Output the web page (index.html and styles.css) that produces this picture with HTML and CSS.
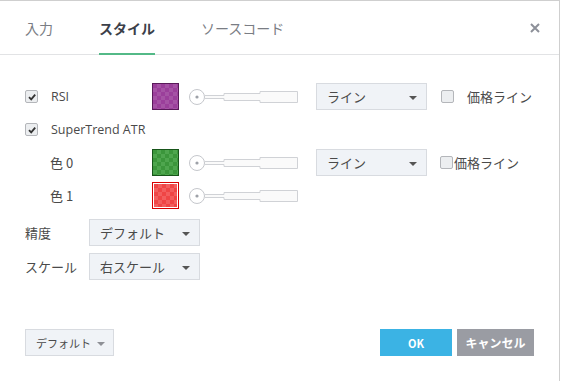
FILE: index.html
```html
<!DOCTYPE html>
<html>
<head>
<link rel="stylesheet" href="styles.css">
</head>
<body>

<div class="dialog">
  <div class="dialog-header">
    <div class="tab">入力</div>
    <div class="tab active">スタイル</div>
    <div class="tab">ソースコード</div>
    <div class="close">
      <svg width="10" height="10" viewBox="0 0 10 10"><path d="M1 1L9 9M9 1L1 9" stroke="#8d9099" stroke-width="2"/></svg>
    </div>
  </div>

  <div class="dialog-body">
    <div class="plot-row">
      <div class="plot-name">
        <span class="check on"><svg width="10" height="10" viewBox="0 0 10 10"><path d="M2 5.2L4.2 7.4L8.2 2.6" stroke="#333" stroke-width="1.8" fill="none"/></svg></span>
        <span class="latin">RSI</span>
      </div>
      <div class="swatch purple"><div class="swatch-fill"></div></div>
      <svg class="slider" width="110" height="20" viewBox="0 0 110 20">
        <path d="M17 8.5H36V6.5H72V4.5H109.5V15.5H72V13.5H36V11.5H17" fill="#fafafa" stroke="#d0d2d6"/>
        <circle cx="9" cy="10" r="7.5" fill="#fff" stroke="#c5c7cc"/>
        <circle cx="9" cy="10" r="1.6" fill="#9ea1a8"/>
      </svg>
      <div class="select wide">ライン<span class="caret"></span></div>
      <div class="price-line">
        <span class="check"></span>
        <span>価格ライン</span>
      </div>
    </div>

    <div class="plot-row">
      <div class="plot-name">
        <span class="check on"><svg width="10" height="10" viewBox="0 0 10 10"><path d="M2 5.2L4.2 7.4L8.2 2.6" stroke="#333" stroke-width="1.8" fill="none"/></svg></span>
        <span class="latin">SuperTrend ATR</span>
      </div>
    </div>

    <div class="plot-row">
      <div class="plot-name sub">色 0</div>
      <div class="swatch green"><div class="swatch-fill"></div></div>
      <svg class="slider" width="110" height="20" viewBox="0 0 110 20">
        <path d="M17 8.5H36V6.5H72V4.5H109.5V15.5H72V13.5H36V11.5H17" fill="#fafafa" stroke="#d0d2d6"/>
        <circle cx="9" cy="10" r="7.5" fill="#fff" stroke="#c5c7cc"/>
        <circle cx="9" cy="10" r="1.6" fill="#9ea1a8"/>
      </svg>
      <div class="select wide">ライン<span class="caret"></span></div>
      <div class="price-line tight">
        <span class="check"></span>
        <span>価格ライン</span>
      </div>
    </div>

    <div class="plot-row">
      <div class="plot-name sub">色 1</div>
      <div class="swatch red"><div class="swatch-fill"></div></div>
      <svg class="slider" width="110" height="20" viewBox="0 0 110 20">
        <path d="M17 8.5H36V6.5H72V4.5H109.5V15.5H72V13.5H36V11.5H17" fill="#fafafa" stroke="#d0d2d6"/>
        <circle cx="9" cy="10" r="7.5" fill="#fff" stroke="#c5c7cc"/>
        <circle cx="9" cy="10" r="1.6" fill="#9ea1a8"/>
      </svg>
    </div>

    <div class="option-rows">
      <div class="option-row">
        <span class="option-label">精度</span>
        <div class="select">デフォルト<span class="caret"></span></div>
      </div>
      <div class="option-row">
        <span class="option-label">スケール</span>
        <div class="select">右スケール<span class="caret"></span></div>
      </div>
    </div>
  </div>

  <div class="dialog-footer">
    <div class="defaults-btn">デフォルト<span class="caret light"></span></div>
    <div class="footer-actions">
      <div class="btn ok">OK</div>
      <div class="btn cancel">キャンセル</div>
    </div>
  </div>
</div>

</body>
</html>
```

FILE: styles.css
```css
body {
  margin: 0;
  background: #fff;
  font-family: "Noto Sans CJK JP", "Noto Sans", sans-serif;
  color: #4a4a4a;
}

.dialog {
  width: 559px;
  height: 380px;
  border-top: 1px solid #cfcfcf;
  border-right: 1px solid #cfcfcf;
  background: #fff;
  position: relative;
}

.dialog-header {
  display: flex;
  align-items: stretch;
  height: 53px;
  padding-left: 25px;
  border-bottom: 1px solid #e2e3e5;
}

.tab {
  font-size: 14px;
  color: #7a7d84;
  margin-right: 46px;
  display: flex;
  align-items: center;
  border-bottom: 2px solid transparent;
  margin-bottom: -1px;
  padding-top: 1px;
}

.tab.active {
  color: #3c4049;
  font-weight: bold;
  border-bottom-color: #53b987;
}

.close {
  margin-left: auto;
  margin-right: 19px;
  display: flex;
  align-items: center;
}

.dialog-body {
  padding: 28px 0 0 25px;
  font-size: 13px;
}

.plot-row {
  display: flex;
  align-items: center;
  height: 27px;
  margin-bottom: 6px;
}

.plot-name {
  width: 127px;
  display: flex;
  align-items: center;
}

.plot-name.sub {
  padding-left: 25px;
  width: 102px;
}

.latin {
  font-family: "Open Sans", sans-serif;
  font-size: 12.5px;
}

.check {
  width: 11px;
  height: 11px;
  border: 1px solid #b4b6ba;
  border-radius: 2px;
  background: #eceef0;
  display: inline-flex;
  align-items: center;
  justify-content: center;
  margin-right: 13px;
  flex: none;
}

.swatch {
  width: 25px;
  height: 25px;
  border: 1px solid;
  padding: 1px;
  box-sizing: content-box;
  width: 23px;
  height: 23px;
  background: #fff;
}

.swatch-fill {
  width: 100%;
  height: 100%;
  background-size: 8px 8px;
}

.swatch.purple {
  border-color: #5a1a5a;
  padding: 0;
  width: 25px;
  height: 25px;
}

.swatch.purple .swatch-fill {
  background-color: #9b3f9b;
  background-image: repeating-conic-gradient(#a553a5 0 25%, transparent 0 50%);
}

.swatch.green {
  border-color: #17551a;
  padding: 0;
  width: 25px;
  height: 25px;
}

.swatch.green .swatch-fill {
  background-color: #3b963b;
  background-image: repeating-conic-gradient(#4ea64e 0 25%, transparent 0 50%);
}

.swatch.red {
  border-color: #d70000;
}

.swatch.red .swatch-fill {
  background-color: #ef4545;
  background-image: repeating-conic-gradient(#f35d5d 0 25%, transparent 0 50%);
}

.slider {
  margin-left: 9px;
  flex: none;
}

.select {
  height: 25px;
  width: 109px;
  box-sizing: content-box;
  border: 1px solid #d8dbe0;
  background: #f0f3f7;
  display: flex;
  align-items: center;
  padding-left: 10px;
  box-sizing: border-box;
  width: 111px;
  height: 27px;
  font-size: 13px;
  color: #4a4a4a;
  position: relative;
}

.select.wide {
  margin-left: 18px;
}

.caret {
  position: absolute;
  right: 9px;
  top: 12px;
  width: 0;
  height: 0;
  border-left: 4px solid transparent;
  border-right: 4px solid transparent;
  border-top: 4px solid #555;
}

.caret.light {
  border-top-color: #8e9096;
  right: 8px;
}

.price-line {
  display: flex;
  align-items: center;
  margin-left: 14px;
  font-size: 13px;
}

.price-line.tight {
  margin-left: 13px;
}

.price-line.tight .check {
  margin-right: 1px;
}

.option-rows {
  margin-top: 10px;
  display: flex;
  flex-direction: column;
  gap: 7px;
}

.option-row {
  display: flex;
  align-items: center;
}

.option-label {
  width: 64px;
}

.dialog-footer {
  position: absolute;
  left: 25px;
  right: 25px;
  bottom: 25px;
  display: flex;
  justify-content: space-between;
  align-items: center;
}

.defaults-btn {
  position: relative;
  width: 89px;
  height: 27px;
  box-sizing: border-box;
  border: 1px solid #d8dbe0;
  background: #f0f3f7;
  font-size: 11px;
  display: flex;
  align-items: center;
  padding-left: 10px;
  color: #4a4a4a;
}

.footer-actions {
  display: flex;
  gap: 5px;
}

.btn {
  height: 27px;
  display: flex;
  align-items: center;
  justify-content: center;
  color: #fff;
  font-weight: bold;
}

.btn.ok {
  width: 72px;
  background: #3bb3e4;
  font-size: 11px;
}

.btn.cancel {
  width: 77px;
  background: #9a9ca3;
  font-size: 12px;
}
```
